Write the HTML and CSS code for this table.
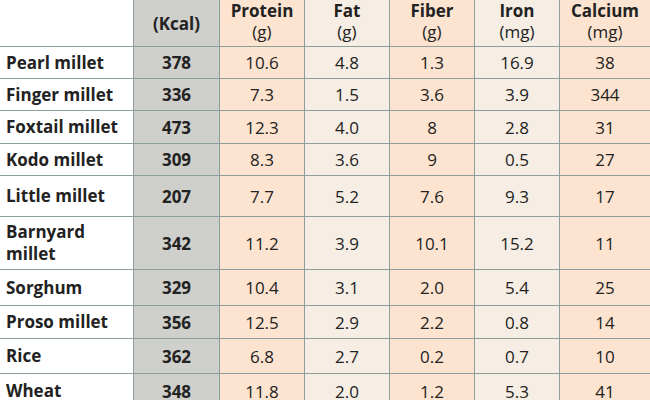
FILE: index.html
```html
<!DOCTYPE html>
<html>
<head>
<meta charset="utf-8">
<link rel="stylesheet" href="styles.css">
</head>
<body>
<table class="nut">
  <colgroup>
    <col class="c-name"><col class="c-kcal"><col class="c-n"><col class="c-n"><col class="c-n"><col class="c-n"><col class="c-last">
  </colgroup>
  <thead>
    <tr class="h46">
      <th class="name"></th>
      <th class="kcal mid">(Kcal)</th>
      <th class="peach">Protein<br><span class="unit">(g)</span></th>
      <th class="beige">Fat<br><span class="unit">(g)</span></th>
      <th class="peach">Fiber<br><span class="unit">(g)</span></th>
      <th class="beige">Iron<br><span class="unit">(mg)</span></th>
      <th class="peach">Calcium<br><span class="unit">(mg)</span></th>
    </tr>
  </thead>
  <tbody>
    <tr class="h32"><td class="name">Pearl millet</td><td class="kcal">378</td><td class="peach">10.6</td><td class="beige">4.8</td><td class="peach">1.3</td><td class="beige">16.9</td><td class="peach">38</td></tr>
    <tr class="h32"><td class="name">Finger millet</td><td class="kcal">336</td><td class="peach">7.3</td><td class="beige">1.5</td><td class="peach">3.6</td><td class="beige">3.9</td><td class="peach">344</td></tr>
    <tr class="h33"><td class="name">Foxtail millet</td><td class="kcal">473</td><td class="peach">12.3</td><td class="beige">4.0</td><td class="peach">8</td><td class="beige">2.8</td><td class="peach">31</td></tr>
    <tr class="h32"><td class="name">Kodo millet</td><td class="kcal">309</td><td class="peach">8.3</td><td class="beige">3.6</td><td class="peach">9</td><td class="beige">0.5</td><td class="peach">27</td></tr>
    <tr class="h41"><td class="name">Little millet</td><td class="kcal">207</td><td class="peach">7.7</td><td class="beige">5.2</td><td class="peach">7.6</td><td class="beige">9.3</td><td class="peach">17</td></tr>
    <tr class="h53"><td class="name">Barnyard millet</td><td class="kcal">342</td><td class="peach">11.2</td><td class="beige">3.9</td><td class="peach">10.1</td><td class="beige">15.2</td><td class="peach">11</td></tr>
    <tr class="h36"><td class="name">Sorghum</td><td class="kcal">329</td><td class="peach">10.4</td><td class="beige">3.1</td><td class="peach">2.0</td><td class="beige">5.4</td><td class="peach">25</td></tr>
    <tr class="h33"><td class="name">Proso millet</td><td class="kcal">356</td><td class="peach">12.5</td><td class="beige">2.9</td><td class="peach">2.2</td><td class="beige">0.8</td><td class="peach">14</td></tr>
    <tr class="h35"><td class="name">Rice</td><td class="kcal">362</td><td class="peach">6.8</td><td class="beige">2.7</td><td class="peach">0.2</td><td class="beige">0.7</td><td class="peach">10</td></tr>
    <tr class="h35"><td class="name">Wheat</td><td class="kcal">348</td><td class="peach">11.8</td><td class="beige">2.0</td><td class="peach">1.2</td><td class="beige">5.3</td><td class="peach">41</td></tr>
  </tbody>
</table>
</body>
</html>
```
FILE: styles.css
```css
html, body {
  margin: 0;
  padding: 0;
  background: #ffffff;
}
body {
  font-family: "Open Sans", "DejaVu Sans", sans-serif;
  color: #222222;
  overflow: hidden;
}
.nut {
  border-collapse: collapse;
  table-layout: fixed;
  width: 649px;
  margin-left: -1px;
  margin-top: -1px;
  font-size: 17px;
}
.c-name { width: 134px; }
.c-kcal { width: 86px; }
.c-n { width: 85px; }
.c-last { width: 91px; }
.nut th, .nut td {
  border: 1.5px solid #8e9e9b;
  padding: 0;
  text-align: center;
  line-height: 21px;
}
.nut th {
  font-weight: 700;
  vertical-align: bottom;
  padding-bottom: 4px;
}
.nut th.mid {
  vertical-align: middle;
  padding-bottom: 0;
}
.unit {
  font-weight: 400;
}
.nut td.name {
  text-align: left;
  padding-left: 6px;
  padding-right: 4px;
  font-weight: 700;
  line-height: 22px;
}
.nut td.kcal {
  font-weight: 700;
}
.name { background: #ffffff; }
.kcal { background: #cfcfcb; }
.peach { background: #fde4d0; }
.beige { background: #f6eee4; }
.h46 { height: 47px; }
.h32 { height: 32px; }
.h33 { height: 33px; }
.h35 { height: 35px; }
.h36 { height: 36px; }
.h41 { height: 41px; }
.h53 { height: 53px; }
```
